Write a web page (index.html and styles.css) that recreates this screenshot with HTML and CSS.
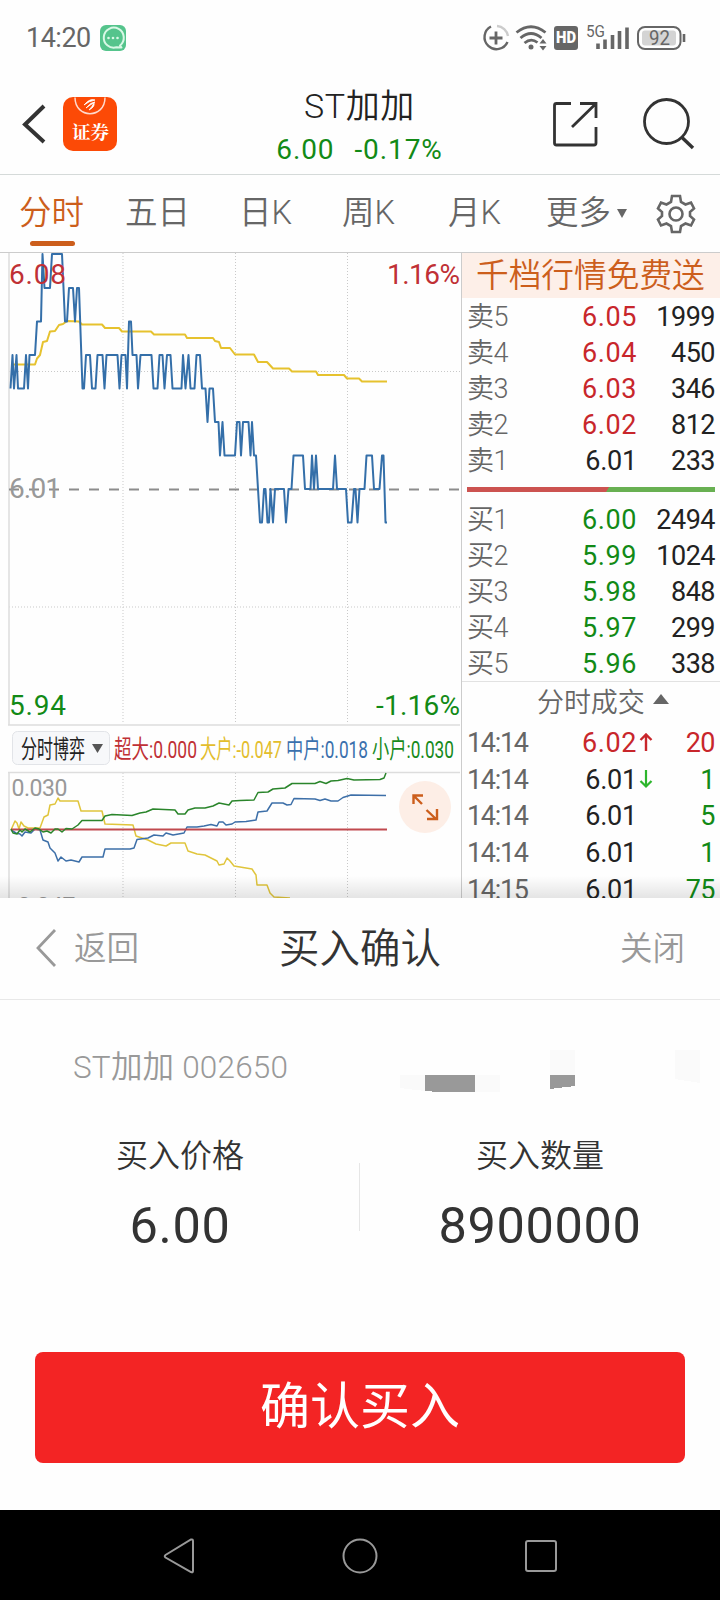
FILE: index.html
```html
<!DOCTYPE html>
<html lang="zh-CN">
<head>
  <meta charset="UTF-8" />
  <meta name="viewport" content="width=device-width, initial-scale=1" />
  <title>ST加加 买入确认</title>
  <link rel="stylesheet" href="styles.css">
</head>
<body>
  <div class="status">
    <span class="clock">14:20</span>
    <svg class="chat" width="26" height="26" viewBox="0 0 26 26">
      <rect width="26" height="26" rx="6" fill="#55c48c"/>
      <path d="M20 20.5A10 10 0 1 0 16.5 22.3L21.5 22.5Z" fill="none" stroke="#d9f8e6" stroke-width="2" stroke-linejoin="round"/>
      <g fill="#d9f8e6"><circle cx="8.5" cy="13" r="1.3"/><circle cx="13" cy="13" r="1.3"/><circle cx="17.5" cy="13" r="1.3"/></g>
    </svg>
    <svg class="sys" width="206" height="34" viewBox="481 20 206 34" fill="none" stroke="#666">
      <path d="M491 25.5A12 12 0 1 0 507.500 41" stroke-width="2.400"/>
      <path d="M497 25A12 12 0 0 1 508 35" stroke="#ccc" stroke-width="2.400"/>
      <path d="M496 30.500V43.500M489.500 37H502.500" stroke-width="2.800"/>
      <path d="M516.500 31.500Q531 20 545.500 31.500M520.500 37Q531 28 541.500 37M524.500 42Q531 36.500 537.500 41.500" stroke-width="2.800"/>
      <circle cx="531" cy="46" r="2.500" fill="#666" stroke="none"/>
      <path d="M539.500 42.500L543 38L546.500 42.500ZM539.500 45L543 49.500L546.500 45Z" fill="#666" stroke="none"/>
      <rect x="554" y="25" width="24" height="24" rx="3" fill="#666" stroke="none"/>
      <text x="556" y="42" class="hd" textLength="20" lengthAdjust="spacingAndGlyphs">HD</text>
      <text x="586" y="35.500" class="net" textLength="19" lengthAdjust="spacingAndGlyphs">5G</text>
      <path d="M598 42.500V48M605 38.500V48M612.500 34V48M619.500 30V48M627 26.500V48" stroke-width="3.600"/>
      <rect x="638" y="26" width="42.500" height="22" rx="7" stroke-width="2"/>
      <rect x="642" y="29.500" width="34" height="15" rx="3" fill="#d4d4d4" stroke="none"/>
      <path d="M684 33V41" stroke-width="2.600"/>
      <text x="649" y="44" class="batt" textLength="21" lengthAdjust="spacingAndGlyphs">92</text>
    </svg>
  </div>

  <header class="top">
    <svg width="118" height="60" viewBox="0 94 118 60">
      <path d="M44 106L25 124.500L44 142" fill="none" stroke="#333" stroke-width="4"/>
      <rect x="63" y="97" width="54" height="54" rx="10" fill="#fc4a06"/>
      <path d="M75 97.500C75 119 105 119 105 97.500" fill="none" stroke="#ffd9cc" stroke-width="1.500"/>
      <path d="M84 105Q90 98 95 100Q89 101 84 105ZM86 108Q91 102 95 102Q90 105 86 108ZM89 110Q95 107 94 103Q92 107 89 110Z" fill="#fff" stroke="#fff" stroke-width=".8"/>
      <text x="72" y="139" class="logo-text" textLength="37">证券</text>
    </svg>
    <div class="stock">
      <h1>ST加加</h1>
      <p><span>6.00</span><span>-0.17%</span></p>
    </div>
    <svg class="actions" width="145" height="56" viewBox="550 96 145 56" fill="none" stroke="#333" stroke-width="2.800">
      <path d="M571 103.500H556.500Q554.500 103.500 554.500 105.500V143Q554.500 145 556.500 145H594Q596 145 596 143V127M580 103.500H596V118M572 127L595 104.500"/>
      <circle cx="666.500" cy="121.500" r="22"/>
      <path d="M681.500 137L693 148" stroke-width="3.400"/>
    </svg>
  </header>

  <nav class="tabs">
    <a class="active">分时</a>
    <a>五日</a>
    <a>日K</a>
    <a>周K</a>
    <a>月K</a>
    <a class="more">更多<i></i></a>
    <svg width="40" height="40" viewBox="0 0 40 40" fill="none" stroke="#666" stroke-width="2.600">
      <path d="M16 2H24L25 8L29.500 10.500L35 8.500L38 14.500L34 18V22L38 25.500L35 31.500L29.500 29.500L25 32L24 38H16L15 32L10.500 29.500L5 31.500L2 25.500L6 22V18L2 14.500L5 8.500L10.500 10.500L15 8Z"/>
      <circle cx="20" cy="20" r="6.500"/>
    </svg>
  </nav>

  <main class="quote">
    <section class="charts">
      <svg width="461" height="645" viewBox="0 253 461 645" fill="none">
        <!-- grid -->
        <path d="M123 253V724M235.500 253V724M347.500 253V724M9 371.500H461M9 607H461M123 773V898M235.500 773V898M347.500 773V898" stroke="#c9c9c9" stroke-dasharray="1 2"/>
        <path d="M9 253V725M9 772V898" stroke="#ddd" stroke-width="1.500"/>
        <path d="M8 725H460M8 772.500H460" stroke="#ddd" stroke-width="1.500"/>
        <path d="M9 489.500H461" stroke="#8c8c8c" stroke-width="2" stroke-dasharray="10 10"/>

        <!-- average + price -->
        <polyline class="line avg" points="11,364.500 35,364.500 37,358.500 40,355 43,342 47,341 50,331.500 55,331 59,325 63,324 67,321 79,321.500 82,324.500 102,324.500 105,328 119,328 122,331.500 151,331.500 154,334.500 185,334.500 187,338 213,338 215,341 219,342 221,348 230,348 235,354.500 254,354.500 258,362 267,362 273,368.500 289,368.500 292,371.500 316,371.500 318,375 344,375 347,378.500 359,378.500 362,381.500 387,381.500"/>
        <polyline class="line price" points="10.500,388.500 12.500,355 14,388.500 16.500,355 18,388.500 24,388.500 26,355 28,388.500 29.500,355 35,355 37,321.500 41,321.500 42.500,254 44.500,288 50,288 52,254 62,254 65,321.500 67,321.500 69,288 73,288 75,321.500 77,288 79,288 82.500,388.500 84,388.500 86,355 90,355 92,388.500 95.500,388.500 97.500,355 102.500,355 104.500,388.500 106.500,355 117.500,355 119.500,388.500 121.500,355 125.500,355 127,388.500 129,321.500 131,321.500 132.500,355 136.500,355 138,388.500 140.500,355 151.500,355 153.500,388.500 157.500,388.500 159.500,355 162.500,355 164.500,388.500 167,355 170.500,355 172.500,388.500 181.500,388.500 183,355 185.500,388.500 188.500,355 190.500,388.500 194.500,388.500 196.500,355 200,355 202,388.500 205.500,388.500 207.500,422 209.500,388.500 213,388.500 215,422 218.500,422 220,455.500 222.500,422 224.500,455.500 235,455.500 237,422 239.500,422 241,455.500 243,422 248.500,422 250.500,455.500 252,422 254,455.500 256,455.500 258,489 260,522.500 262,522.500 264,489 265.500,489 267.500,522.500 269,522.500 270.500,489 273,522.500 275,489 284,489 286,522.500 288.500,489 291.500,489 293.500,455.500 303,455.500 305,489 310.500,489 312,455.500 314,489 316,455.500 318,489 333,489 335,455.500 337,489 346,489 348,522.500 351.500,522.500 354,489 355.500,489 357.500,522.500 359.500,489 364.500,489 366.500,455.500 372,455.500 374,489 379.500,489 382,455.500 383.500,455.500 385.500,522.500 387,522.500"/>
        <g class="axis">
          <text x="9" y="283.500" class="up" textLength="57">6.08</text>
          <text x="387" y="283.500" class="up" textLength="73">1.16%</text>
          <text x="9" y="498" class="flat" textLength="52">6.01</text>
          <text x="9" y="715" class="down" textLength="57">5.94</text>
          <text x="376" y="715" class="down" textLength="84">-1.16%</text>
        </g>

        <!-- indicator legend -->
        <rect x="12.500" y="731.500" width="97" height="33" rx="5" fill="#f7f8fa" stroke="#e2e4e8"/>
        <path d="M92 744H103L97.500 753Z" fill="#555"/>
        <g class="legend">
          <text x="21" y="757.500" fill="#222" textLength="64" lengthAdjust="spacingAndGlyphs">分时博弈</text>
          <text x="114" y="757.500" fill="#c03035" textLength="83" lengthAdjust="spacingAndGlyphs">超大:0.000</text>
          <text x="200" y="757.500" fill="#e3bd2c" textLength="82" lengthAdjust="spacingAndGlyphs">大户:-0.047</text>
          <text x="286" y="757.500" fill="#3a70ad" textLength="82" lengthAdjust="spacingAndGlyphs">中户:0.018</text>
          <text x="372" y="757.500" fill="#178a1b" textLength="82" lengthAdjust="spacingAndGlyphs">小户:0.030</text>
        </g>

        <!-- fund flow -->
        <polyline class="line flow" stroke="#e0c53c" points="11,830 15,821 17,823 19,829 21,822 24,826 28,828 40,828 44,817 48,815 50,805 55,804 58,798 60,801 78,801 81,811 102,811 105,824 133,825 136,836 148,840 156,844 166,846 171,843 185,843 188,851 197,854 205,855 217,861 219,865 224,864 227,858 230,861 234,866 240,867 252,869 256,875 257,885 267,885 270,893 274,897 290,898"/>
        <polyline class="line flow" stroke="#3d6fa8" points="11,830 16,833 20,834 22,836 25,832 31,833 35,829 40,830 43,840 48,842 50,848 55,853 58,861 61,857 66,861 71,860 79,862 82,857 103,857 105,849 130,849 134,848 137,839.500 148,838 154,835 163,836 166,833 173,835 184,833 187,827 197,827 204,826 211,824.500 217,826 219,822 223,822 226,825 232,824 235,822 246,821.500 256,820 258,812 267,811 272,803 283,803 287,805 291,804.500 294,798.500 315,799 320,800.500 325,799 331,801 338,801 343,797.500 351,795 386,795.500"/>
        <path d="M11 829.500H387" stroke="#c0494e" stroke-width="1.800"/>
        <polyline class="line flow" stroke="#2a852b" points="11,829 13,833 17,834 20,830 22,832 25,829 30,832 35,828 39,829 43,832 47,831 51,833 55,829 58,829 62,832 66,828.500 72,829 78,825 82,820.500 102,820.500 105,816 112,814.500 132,815.500 140,813 146,812 153,809 175,810 178,814 185,814 188,810 195,808 205,808 213,806 219,803 229,805 232,801 240,800.500 254,800 258,792.500 268,792 273,789 285,788 292,783.500 315,783.500 320,781.500 326,783.500 331,781 338,780.500 347,778.500 354,780 380,779.500 384,778 386,773"/>
        <text x="11.500" y="796" class="scale" textLength="56">0.030</text>
        <text x="11.500" y="914" class="scale" textLength="64">-0.047</text>
        <circle cx="425" cy="807" r="26" fill="#fdeee6"/>
        <path d="M422 804L414 796M413.500 804V795.500H423M426.500 810L436 819M427 819H437V809" stroke="#cc5e1c" stroke-width="2.400"/>
      </svg>
    </section>

    <aside class="book">
      <div class="promo">千档行情免费送</div>
      <ul class="levels">
        <li><span>卖5</span><b class="up">6.05</b><em>1999</em></li>
        <li><span>卖4</span><b class="up">6.04</b><em>450</em></li>
        <li><span>卖3</span><b class="up">6.03</b><em>346</em></li>
        <li><span>卖2</span><b class="up">6.02</b><em>812</em></li>
        <li><span>卖1</span><b class="slim">6.01</b><em>233</em></li>
      </ul>
      <div class="ratio"></div>
      <ul class="levels">
        <li><span>买1</span><b class="down">6.00</b><em>2494</em></li>
        <li><span>买2</span><b class="down">5.99</b><em>1024</em></li>
        <li><span>买3</span><b class="down">5.98</b><em>848</em></li>
        <li><span>买4</span><b class="down">5.97</b><em>299</em></li>
        <li><span>买5</span><b class="down">5.96</b><em>338</em></li>
      </ul>
      <div class="deals-title">分时成交<i></i></div>
      <ul class="deals">
        <li><span>14:14</span><b class="up">6.02</b><svg width="14" height="20" viewBox="0 0 14 20"><path d="M7 18V2M1.500 7L7 1.500L12.500 7" fill="none" stroke="#c8262b" stroke-width="2.400"/></svg><em class="up">20</em></li>
        <li><span>14:14</span><b class="slim">6.01</b><svg width="14" height="20" viewBox="0 0 14 20"><path d="M7 0V16M1.500 11L7 16.500L12.500 11" fill="none" stroke="#2db52d" stroke-width="2.200"/></svg><em class="down">1</em></li>
        <li><span>14:14</span><b class="slim">6.01</b><i></i><em class="down">5</em></li>
        <li><span>14:14</span><b class="slim">6.01</b><i></i><em class="down">1</em></li>
        <li><span>14:15</span><b class="slim">6.01</b><i></i><em class="down">75</em></li>
      </ul>
    </aside>
  </main>

  <section class="sheet">
    <div class="sheet-head">
      <a class="back">
        <svg width="22" height="40" viewBox="0 0 22 40"><path d="M20 2L3 20L20 38" fill="none" stroke="#999" stroke-width="2.800"/></svg>
        返回
      </a>
      <h2>买入确认</h2>
      <a class="close">关闭</a>
    </div>
    <div class="account">
      <span>ST加加 002650</span>
      <svg width="300" height="44" viewBox="400 1050 300 44" shape-rendering="crispEdges">
        <path d="M400 1075H425V1091L400 1088ZM475 1075H500V1092H475ZM550 1050H575V1075H550ZM675 1050H700V1083L675 1079Z" fill="#fafafa"/>
        <path d="M425 1075H475V1092H432V1091H425ZM550 1075H575V1086L550 1089Z" fill="#999"/>
      </svg>
    </div>
    <div class="order">
      <div><label>买入价格</label><strong>6.00</strong></div>
      <div><label>买入数量</label><strong>8900000</strong></div>
    </div>
    <button class="confirm">确认买入</button>
  </section>

  <footer class="keys">
    <svg width="32" height="36" viewBox="0 0 32 36"><path d="M28 1.500Q30 1 30 3V33Q30 35 28 34L2.500 19.500Q1 18 2.500 17Z"/></svg>
    <svg width="36" height="36" viewBox="0 0 36 36"><circle cx="18" cy="18" r="16.500"/></svg>
    <svg width="32" height="32" viewBox="0 0 32 32"><rect x="1" y="1" width="30" height="30" rx="2"/></svg>
  </footer>
</body>
</html>
```
FILE: styles.css
```css
* { margin:0; padding:0; box-sizing:border-box }
body {
  width:720px; height:1600px; overflow:hidden;
  font-family:Roboto,"Noto Sans CJK SC",sans-serif;
  font-weight:350; color:#222; background:#fefefe;
}
svg { display:block; flex:none }
ul { list-style:none }
i { font-style:normal }
b, em, strong { font-style:normal; font-weight:400 }
h1, h2 { font-weight:inherit }
.up { color:#c8262b; fill:#c03035 }
.down { color:#128a16; fill:#128a16 }

/* status bar */
.status {
  height:74px; padding:2px 33px 0 26px;
  display:flex; align-items:center;
}
.clock { width:74px; font-size:27px; font-weight:400; letter-spacing:-.5px; color:#666 }
.sys { margin-left:auto }
.sys text { stroke:none; fill:#666 }
.sys .hd { font-size:16px; font-weight:900; fill:#fff }
.sys .net { font-size:16px; font-weight:400 }
.sys .batt { font-size:20px; font-weight:400 }

/* header */
.top {
  height:101px; padding-right:25px;
  display:grid; grid-template-columns:118px 1fr 145px;
  align-items:center; border-bottom:1px solid #d5dad9;
}
.logo-text { font:700 18.500px "Noto Serif CJK SC","Noto Sans CJK SC",serif; fill:#fff }
.stock { text-align:center; padding-left:51px }
.stock h1 { font-size:34px; line-height:44px; margin-top:7px; letter-spacing:.6px }
.stock p {
  display:flex; justify-content:center; gap:20px;
  font-size:28px; font-weight:400; line-height:44px; letter-spacing:.9px; color:#128a16;
}

/* period tabs */
.tabs {
  height:78px; padding:0 24px 0 19px;
  display:grid; grid-template-columns:106px 114px 103px 106px 98px 1fr 40px;
  align-items:center; justify-items:start;
  border-bottom:1px solid #ccc;
}
.tabs a {
  position:relative; height:77px; line-height:76px;
  font-size:32.500px; color:#666; white-space:nowrap;
}
.tabs .active { color:#cc5e1c }
.tabs .active::after {
  content:""; position:absolute; left:11px; right:9px; bottom:6px;
  height:5px; border-radius:3px; background:#cc5e1c;
}
.more i {
  display:inline-block; margin-left:6px; vertical-align:6px;
  border:5.500px solid transparent; border-top:9px solid #666; border-bottom:0;
}

/* charts + order book */
.quote {
  position:relative; height:645px; overflow:hidden;
  display:grid; grid-template-columns:461px 259px;
}
.quote::after {
  content:""; position:absolute; left:0; right:0; bottom:0; height:22px;
  background:linear-gradient(rgba(0,0,0,0),rgba(0,0,0,.1));
}
.line { fill:none; stroke-width:2; stroke-linejoin:round }
.avg { stroke:#e6c22e }
.price { stroke:#346fa9 }
.flow { stroke-width:1.500 }
.axis text { font-size:28px; font-weight:400 }
.flat { fill:#999 }
.legend text { font-size:24.500px; font-weight:400 }
.scale { font-size:23px; font-weight:400; fill:#999 }

.book { border-left:1px solid #ccc; font-size:27px; letter-spacing:-.5px }
.promo {
  height:45px; line-height:46px; padding-left:14px;
  background:#fdefe8; color:#cc5e1c; font-size:32.700px; letter-spacing:0;
}
.levels li, .deals li {
  display:grid; grid-template-columns:1fr 84px 79px;
  height:36px; line-height:38px; padding:0 5px;
}
.levels span, .deals span { color:#666 }
.deals span { font-weight:400; letter-spacing:-1.300px }
.levels b, .levels em, .deals b, .deals em { text-align:right }
.levels b, .deals b { letter-spacing:.6px; margin-right:-1px }
.levels .slim, .deals .slim { letter-spacing:-.2px }
.ratio {
  height:5px; margin:9px 5px;
  background:linear-gradient(120deg,#cc5350 56.500%,#68b052 56.700%);
}
.deals-title {
  height:43px; border-top:1px solid #e2e2e2; line-height:42px;
  padding-left:75px; display:flex; color:#666; letter-spacing:-.1px;
}
.deals-title i {
  margin:12px 0 0 8px; height:0;
  border:8px solid transparent; border-bottom:10px solid #666; border-top:0;
}
.deals li {
  grid-template-columns:1fr 84px 20px 59px;
  height:36.700px; line-height:38.700px; align-items:center;
}
.deals svg { margin-left:3px }

/* buy sheet */
.sheet { height:612px; background:#fefefe; color:#333 }
.sheet-head {
  height:102px; padding:0 35px 7px; border-bottom:1px solid #e8e8e8;
  display:grid; grid-template-columns:1fr auto 1fr; align-items:center;
  font-size:32.500px; color:#999;
}
.sheet-head h2 { font-size:40.500px; color:#333 }
.back { display:flex; align-items:center; gap:17px }
.back svg { margin-top:5px }
.close { text-align:right }
.account {
  display:flex; justify-content:space-between; align-items:center;
  height:44px; margin-top:50px; padding:0 20px 0 73px;
  font-size:31.500px; letter-spacing:.2px; color:#999;
}
.account span { margin-top:-17px }
.order { display:grid; grid-template-columns:1fr 1fr; margin-top:36px; position:relative }
.order::after {
  content:""; position:absolute; left:359px; top:33px;
  width:1px; height:68px; background:#e6e6e6;
}
.order div { text-align:center }
.order label { display:block; font-size:32px; line-height:52px }
.order strong { display:block; margin-top:14px; font-size:50.500px; letter-spacing:.6px; line-height:60px }
.confirm {
  display:block; width:650px; height:111px; margin:96px 35px 0;
  border:0; border-radius:8px; background:#f32424; color:#fff;
  font:inherit; font-size:50px; font-weight:400; line-height:110px; padding-bottom:1px;
}

/* system keys */
.keys {
  height:90px; padding:1px 163px 0; background:#000;
  display:flex; align-items:center; justify-content:space-between;
}
.keys svg { fill:none; stroke:#999; stroke-width:2 }
```
